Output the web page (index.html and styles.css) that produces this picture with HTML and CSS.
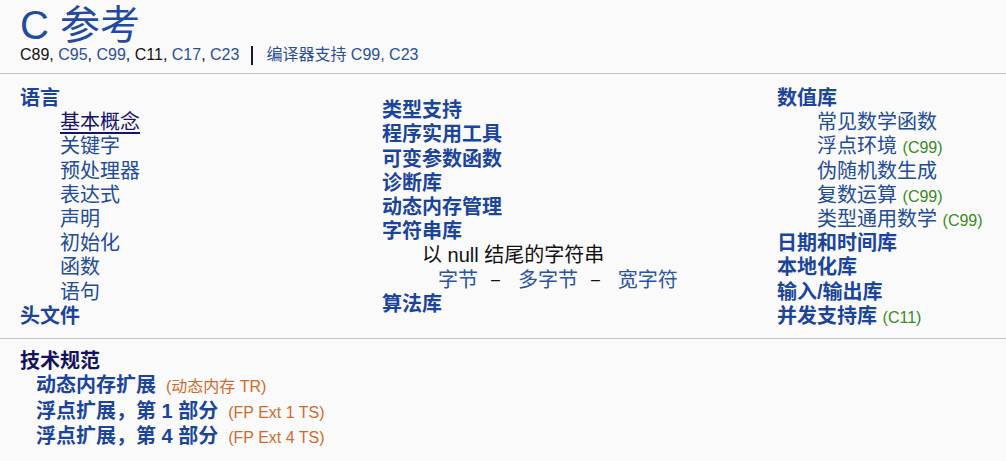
FILE: index.html
```html
<!DOCTYPE html>
<html lang="zh">
<head>
<meta charset="utf-8">
<title>C 参考</title>
<link rel="stylesheet" href="styles.css">
</head>
<body>
<header class="header">
  <h1 class="title">C 参考</h1>
  <div class="subtitle">
    <span class="plain">C89</span>, <a class="lnk" href="#">C95</a>, <a class="lnk" href="#">C99</a>, <span class="plain">C11</span>, <a class="lnk" href="#">C17</a>, <a class="lnk" href="#">C23</a><span class="bar"></span><a class="lnk" href="#">编译器支持 C99, C23</a>
  </div>
</header>

<main class="main">
  <div class="col col1">
    <a class="head" href="#">语言</a>
    <div class="sub">
      <a class="item visited" href="#">基本概念</a>
      <a class="item" href="#">关键字</a>
      <a class="item" href="#">预处理器</a>
      <a class="item" href="#">表达式</a>
      <a class="item" href="#">声明</a>
      <a class="item" href="#">初始化</a>
      <a class="item" href="#">函数</a>
      <a class="item" href="#">语句</a>
    </div>
    <a class="head" href="#">头文件</a>
  </div>

  <div class="col col2">
    <a class="head" href="#">类型支持</a>
    <a class="head" href="#">程序实用工具</a>
    <a class="head" href="#">可变参数函数</a>
    <a class="head" href="#">诊断库</a>
    <a class="head" href="#">动态内存管理</a>
    <a class="head" href="#">字符串库</a>
    <div class="strsub">以 null 结尾的字符串</div>
    <div class="strkinds"><a class="lnk" href="#">字节</a><span class="sep">–</span><a class="lnk" href="#">多字节</a><span class="sep">–</span><a class="lnk" href="#">宽字符</a></div>
    <a class="head" href="#">算法库</a>
  </div>

  <div class="col col3">
    <a class="head" href="#">数值库</a>
    <div class="sub">
      <a class="item" href="#">常见数学函数</a>
      <div class="item-row"><a class="item" href="#">浮点环境</a> <span class="rev">(C99)</span></div>
      <a class="item" href="#">伪随机数生成</a>
      <div class="item-row"><a class="item" href="#">复数运算</a> <span class="rev">(C99)</span></div>
      <div class="item-row"><a class="item" href="#">类型通用数学</a> <span class="rev">(C99)</span></div>
    </div>
    <a class="head" href="#">日期和时间库</a>
    <a class="head" href="#">本地化库</a>
    <a class="head" href="#">输入/输出库</a>
    <div class="item-row"><a class="head" href="#">并发支持库</a> <span class="rev">(C11)</span></div>
  </div>
</main>

<section class="specs">
  <a class="head visited" href="#">技术规范</a>
  <div class="spec-list">
    <div class="spec"><a class="head" href="#">动态内存扩展</a><span class="ts">(动态内存 TR)</span></div>
    <div class="spec"><a class="head" href="#">浮点扩展，第 1 部分</a><span class="ts">(FP Ext 1 TS)</span></div>
    <div class="spec"><a class="head" href="#">浮点扩展，第 4 部分</a><span class="ts">(FP Ext 4 TS)</span></div>
  </div>
</section>
</body>
</html>
```

FILE: styles.css
```css
html, body {
  margin: 0;
  padding: 0;
  background: #fafafa;
}

body {
  font-family: "Liberation Sans", Arial, "Noto Sans CJK SC", sans-serif;
  color: #111;
  font-size: 20px;
}

a {
  text-decoration: none;
  color: #1f4a9c;
}

.header {
  padding: 5px 20px 8px;
  border-bottom: 1px solid #c4c4c4;
}

.title {
  margin: 0;
  font-size: 40px;
  line-height: 40px;
  font-weight: normal;
  color: #1f4ba0;
}

.subtitle {
  font-size: 16px;
  line-height: 20px;
  color: #111;
  display: flex;
  align-items: center;
  white-space: pre;
}

.subtitle .lnk {
  color: #2a4f98;
}

.bar {
  display: inline-block;
  width: 2px;
  height: 19px;
  background: #1a1a2a;
  margin: 0 13px 0 12px;
}

.main {
  display: grid;
  grid-template-columns: 362px 395px 1fr;
  align-items: center;
  padding: 12px 20px 10px;
  border-bottom: 1px solid #c4c4c4;
}

.col {
  display: flex;
  flex-direction: column;
  align-items: flex-start;
  line-height: 24.2px;
}

.head {
  font-weight: bold;
  color: #1b459d;
}

.sub {
  display: flex;
  flex-direction: column;
  align-items: flex-start;
  padding-left: 40px;
}

.item {
  color: #234c98;
}

.item.visited {
  color: #15136a;
  text-decoration: underline;
  text-underline-offset: 3px;
}

.head.visited {
  color: #14125e;
}

.item-row {
  white-space: pre;
  height: 24.2px;
}

.rev {
  font-size: 16px;
  line-height: 1;
  color: #3a8a22;
}

.strsub {
  padding-left: 40px;
  color: #111;
}

.strkinds {
  padding-left: 56px;
  display: flex;
  align-items: center;
  height: 24.2px;
}

.strkinds .lnk {
  color: #2a54a0;
}

.sep {
  font-size: 16px;
  line-height: 1;
  color: #111;
  margin: 0 18px 0 13px;
}

.specs {
  padding: 10px 20px 0;
  line-height: 24.2px;
  display: flex;
  flex-direction: column;
  align-items: flex-start;
}

.spec-list {
  display: flex;
  flex-direction: column;
  padding-left: 16px;
}

.spec {
  display: flex;
  align-items: baseline;
  height: 25.6px;
  line-height: 25.6px;
}

.ts {
  font-size: 16px;
  line-height: 1;
  color: #cf6a2a;
  margin-left: 10px;
}
```
